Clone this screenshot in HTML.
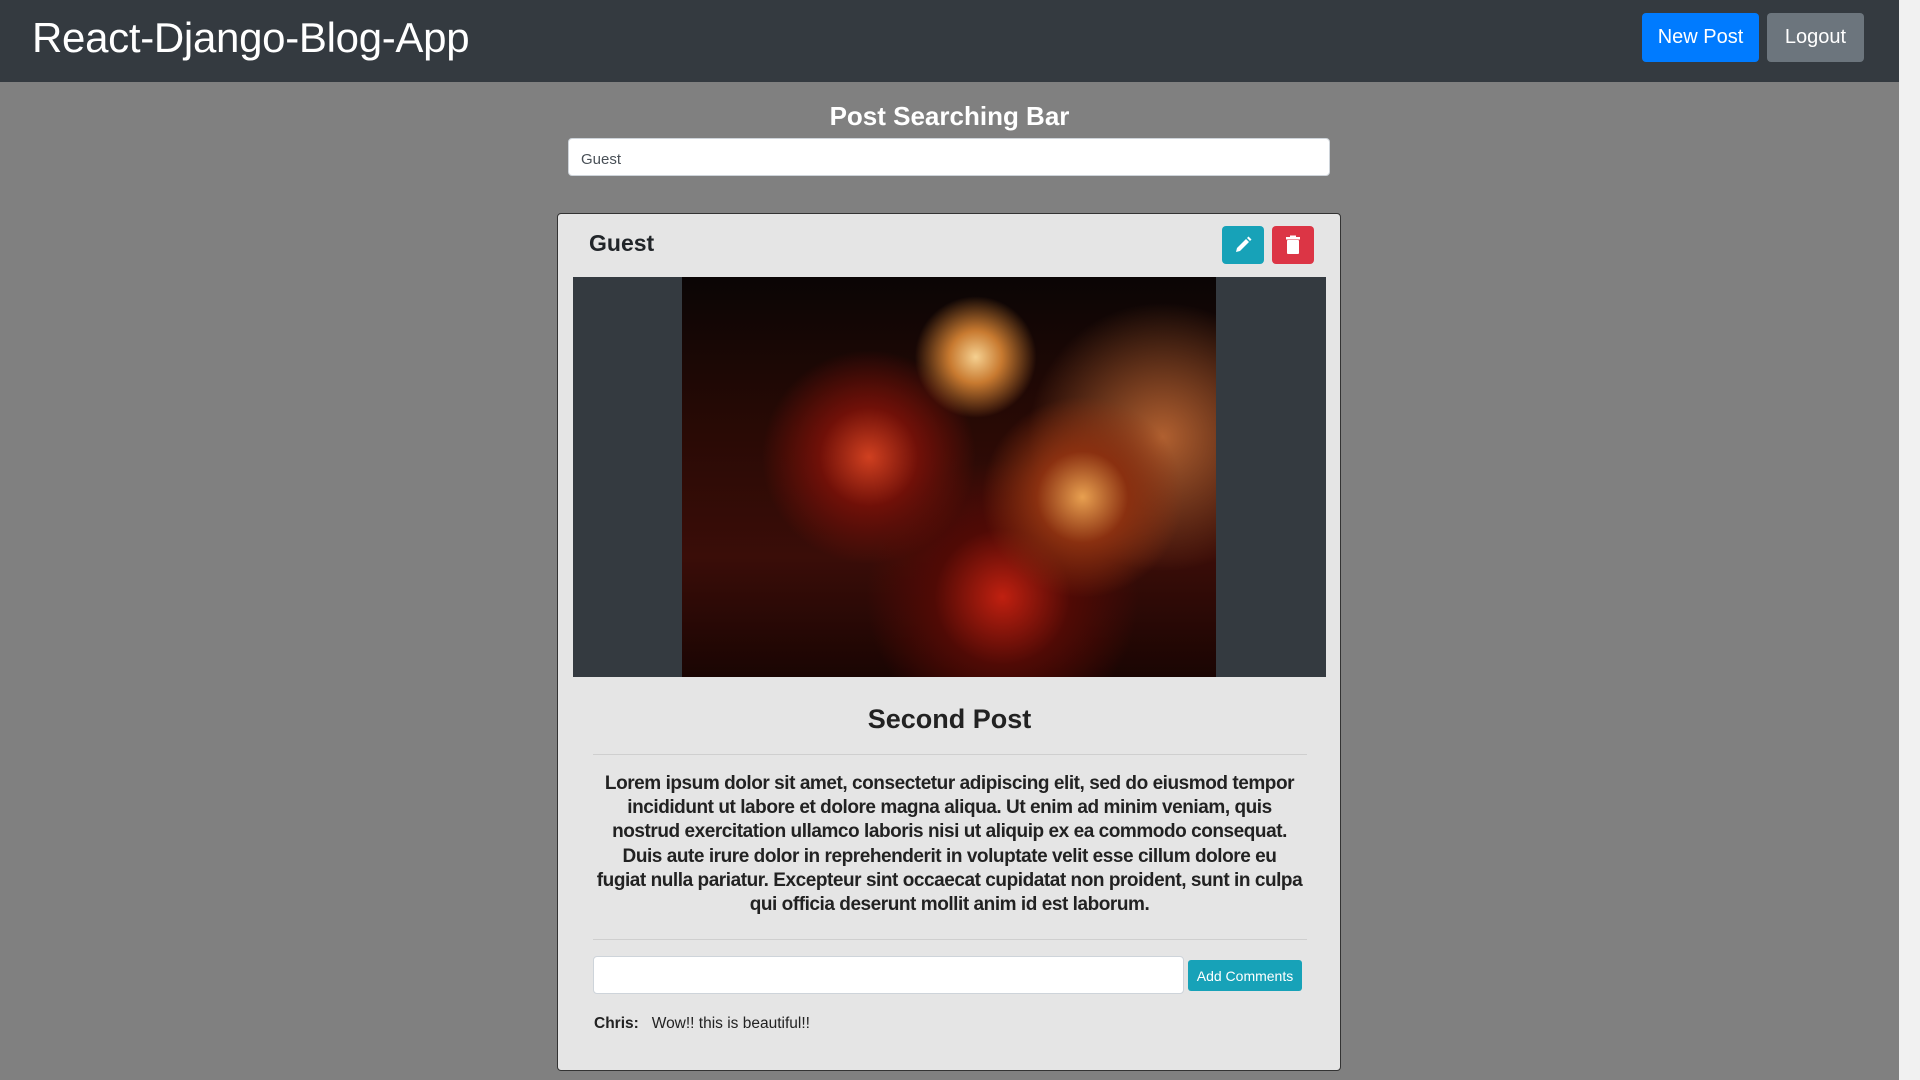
<!DOCTYPE html>
<html><head><meta charset="utf-8"><style>
*{box-sizing:border-box;margin:0;padding:0}
body{width:1920px;height:1080px;overflow:hidden;background:#808080;font-family:"Liberation Sans",sans-serif;position:relative;color:#212529}
.hdr{position:absolute;left:0;top:0;width:1899px;height:82px;background:#343a40}
.title{position:absolute;left:32px;top:14px;font-size:42px;color:#fff;letter-spacing:-0.3px}
.btn{position:absolute;color:#fff;font-size:20px;border-radius:4px;display:flex;align-items:center;justify-content:center}
.sb{position:absolute;left:1899px;top:0;width:21px;height:1080px;background:#f1f1f1}
.thumb{position:absolute;left:1902px;top:22px;width:15px;height:1036px;background:#c1c1c1}
.h2{position:absolute;left:0;width:1899px;text-align:center;font-weight:bold}
.inp{position:absolute;background:#fff;border:1px solid #ced4da;border-radius:4px}
.card{position:absolute;left:557px;top:213px;width:784px;height:858px;background:#e5e5e5;border:1px solid #333;border-radius:4px}
.img{position:absolute;left:573px;top:277px;width:753px;height:400px;background:#343a40;overflow:hidden}
.pic{position:absolute;left:109px;top:0;width:534px;height:400px;background:
radial-gradient(circle at 55% 20%,#f5d090 0,#c87a30 6%,transparent 14%),
radial-gradient(circle at 75% 55%,#e8a050 0,#8a3010 10%,transparent 22%),
radial-gradient(circle at 35% 45%,#d04020 0,#701008 12%,transparent 26%),
radial-gradient(circle at 60% 80%,#c02010 0,#500a05 15%,transparent 30%),
radial-gradient(circle at 90% 40%,#b06030 0,transparent 25%),
linear-gradient(180deg,#0a0505 0%,#2a0a05 40%,#3a0d08 70%,#1a0503 100%)}
.hr{position:absolute;left:593px;width:714px;height:1px;background:#cfcfcf}
p.body{position:absolute;left:596px;top:772px;width:707px;text-align:center;font-size:19px;line-height:24.2px;font-weight:bold;color:#222;letter-spacing:-0.45px}
</style></head><body>
<div class="hdr"><div class="title">React-Django-Blog-App</div>
<div class="btn" style="left:1642px;top:13px;width:117px;height:49px;background:#007bff">New Post</div>
<div class="btn" style="left:1767px;top:13px;width:97px;height:49px;background:#6c757d">Logout</div></div>
<div class="sb"></div>
<div class="h2" style="top:101px;font-size:26px;color:#fff">Post Searching Bar</div>
<div class="inp" style="left:568px;top:138px;width:762px;height:38px;padding:12px 12px;font-size:15px;color:#495057">Guest</div>
<div class="card"></div>
<div style="position:absolute;left:589px;top:230px;font-size:23px;font-weight:bold">Guest</div>
<div class="btn" style="left:1222px;top:226px;width:42px;height:38px;background:#17a2b8"><svg width="20" height="20" viewBox="0 0 20 20"><path d="M3 17 L4 13 L13 4 L16 7 L7 16 Z" fill="#fff"/><path d="M14 3 L15.5 1.5 L18.5 4.5 L17 6 Z" fill="#fff"/></svg></div>
<div class="btn" style="left:1272px;top:226px;width:42px;height:38px;background:#dc3545"><svg width="18" height="20" viewBox="0 0 18 20"><rect x="2" y="2" width="14" height="2.5" fill="#fff"/><rect x="6" y="0.5" width="6" height="2" fill="#fff"/><rect x="3" y="5" width="12" height="14" rx="1" fill="#fff"/></svg></div>
<div class="img"><div class="pic"></div></div>
<div class="h2" style="top:704px;font-size:27px;color:#222">Second Post</div>
<div class="hr" style="top:754px"></div>
<p class="body">Lorem ipsum dolor sit amet, consectetur adipiscing elit, sed do eiusmod tempor incididunt ut labore et dolore magna aliqua. Ut enim ad minim veniam, quis nostrud exercitation ullamco laboris nisi ut aliquip ex ea commodo consequat. Duis aute irure dolor in reprehenderit in voluptate velit esse cillum dolore eu fugiat nulla pariatur. Excepteur sint occaecat cupidatat non proident, sunt in culpa qui officia deserunt mollit anim id est laborum.</p>
<div class="hr" style="top:939px"></div>
<div class="inp" style="left:593px;top:956px;width:591px;height:38px"></div>
<div class="btn" style="left:1188px;top:960px;width:114px;height:31px;background:#17a2b8;font-size:14px;border-radius:3px">Add Comments</div>
<div style="position:absolute;left:594px;top:1015px;font-size:15.5px;color:#222"><b>Chris:</b>&nbsp;&nbsp; Wow!! this is beautiful!!</div>
</body></html>
